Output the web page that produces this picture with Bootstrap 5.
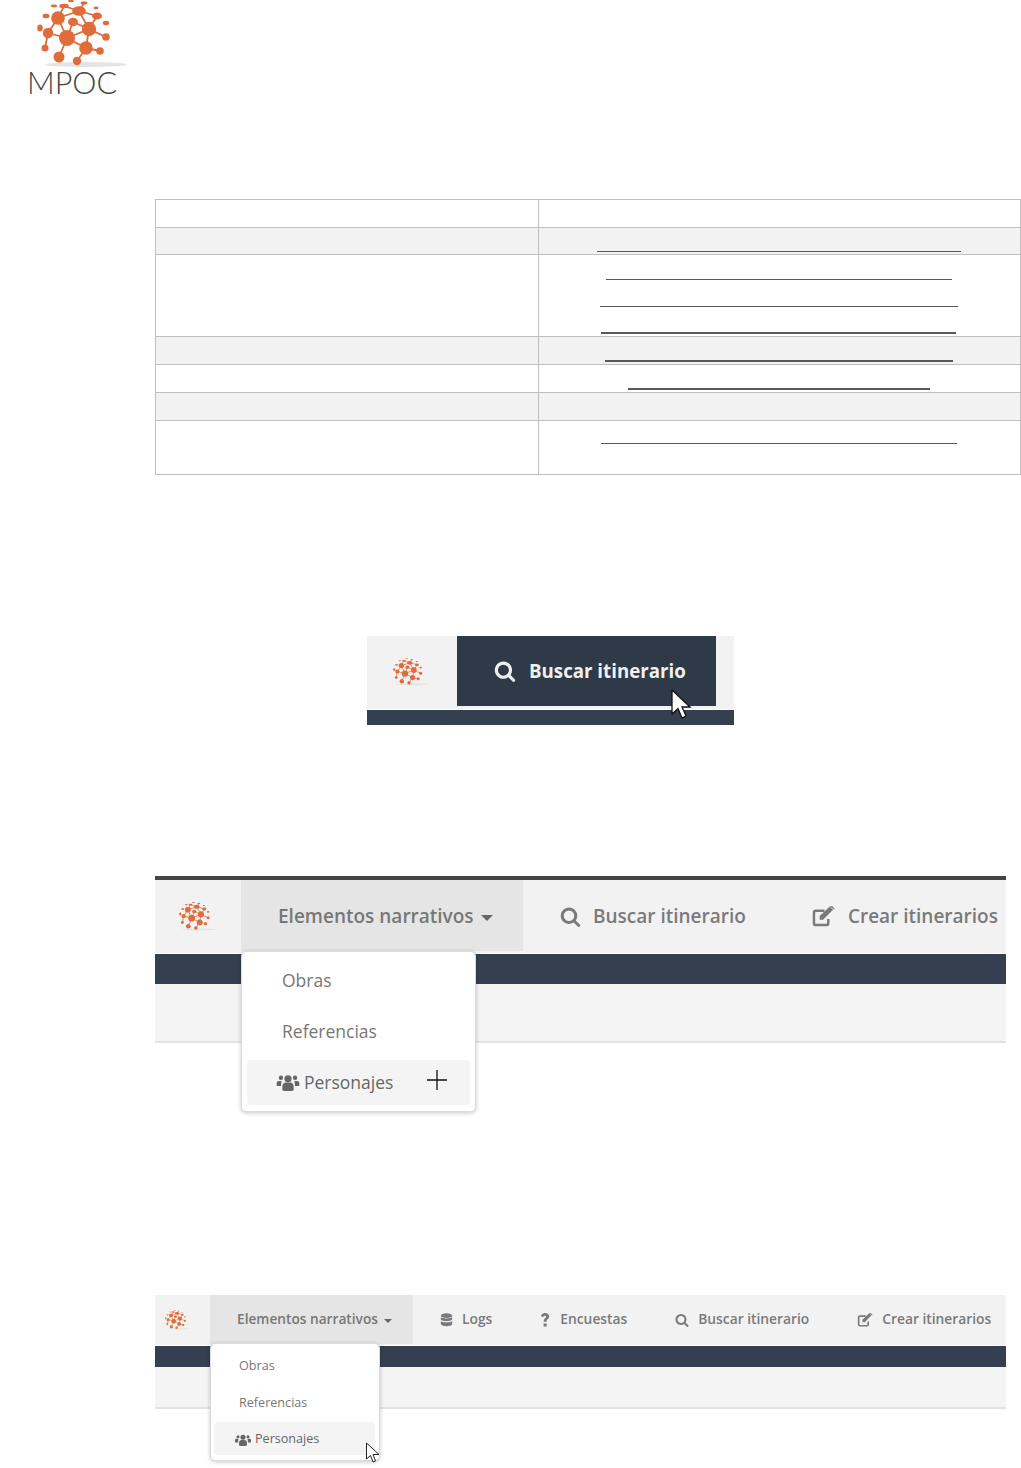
<!DOCTYPE html>
<html lang="es">
  <head>
    <meta charset="UTF-8" />
    <title>MPOC</title>
    <link href="https://cdn.jsdelivr.net/npm/bootstrap@5.3.3/dist/css/bootstrap.min.css" rel="stylesheet" />
    <script src="https://cdn.jsdelivr.net/npm/bootstrap@5.3.3/dist/js/bootstrap.bundle.min.js"></script>
    <style>
      body {
        margin: 0;
        background: #fff;
        font-family: "Open Sans", "Liberation Sans", sans-serif;
      }

      /* logo */
      .mp-logo {
        height: 199px;
        padding-left: 37px;
      }
      .mp-logo svg {
        display: block;
        width: 90px;
        height: 68px;
      }
      .mp-logo-text {
        margin: -4px 0 0 -10px;
        font-family: "Lato", "Open Sans", sans-serif;
        font-weight: 300;
        font-size: 30.5px;
        line-height: 36px;
        color: #444;
      }

      /* table */
      .mp-table {
        width: 866px;
        margin: 0 0 0 155px;
        table-layout: fixed;
        --bs-table-border-color: #bfbfbf;
      }
      .mp-table > tbody > tr > td {
        padding: 0 2px 0 0;
        vertical-align: top;
      }
      .mp-table > tbody > tr > td.mp-gap1 {
        padding-top: 1px;
      }
      .mp-table > tbody > tr.mp-shade > td {
        background-color: #f2f2f2;
      }
      .mp-col-a { width: 383px; }
      .mp-h27 { height: 27px; }
      .mp-h28 { height: 28px; }
      .mp-h54 { height: 54px; }
      .mp-h82 { height: 82px; }
      .mp-line {
        height: 24px;
        margin: 0 auto 3px;
        border-bottom: 1px solid #595959;
      }
      .mp-line:last-child { margin-bottom: 0; }
      .mp-line-b { border-bottom-width: 2px; }
      .mp-line-s { height: 23px; }
      .mp-line-t { height: 25px; }
      .w364 { width: 364px; }
      .w346 { width: 346px; }
      .w358 { width: 358px; }
      .w355 { width: 355px; }
      .w348 { width: 348px; }
      .w302 { width: 302px; }
      .w356 { width: 356px; }

      /* screenshots */
      .mp-shot { margin-left: 155px; width: 851px; }
      .mp-nav { background: #f2f2f2; color: #777; white-space: nowrap; }
      .mp-logo-cell { flex-shrink: 0; }
      .mp-link { color: #7a7a7a; }
      .mp-bar { background: #343f50; }
      .mp-sub { background: #f4f4f4; border-bottom: 2px solid #e3e3e3; }
      .mp-active { background: #e5e5e5; position: relative; flex-shrink: 0; }
      .mp-caret {
        display: inline-block;
        border-style: solid;
        border-color: #666 transparent transparent;
      }
      .mp-menu.dropdown-menu {
        position: absolute;
        left: 0;
        margin: 0;
        min-width: 0;
        border: 1px solid #dcdcdc;
        border-radius: 5px;
        box-shadow: 0 1px 4px rgba(0, 0, 0, 0.22);
        color: #777;
      }
      .mp-menu .dropdown-item { color: #777; }
      .mp-menu .mp-hover { background: #f4f4f4; border-radius: 4px; color: #666; }

      /* first picture */
      .mp-shot-a { margin-left: 367px; width: 367px; }
      .mp-shot-a .mp-nav { height: 74px; border-bottom: 1px solid #fff; }
      .mp-shot-a .mp-logo-cell { width: 90px; padding-left: 26px; padding-top: 21px; }
      .mp-shot-a .mp-logo-cell svg { width: 36px; height: 30px; display: block; }
      .mp-tab {
        width: 259px;
        height: 70px;
        padding-left: 37px;
        gap: 13px;
        background: #2e3a47;
        color: #f0f0f0;
        font-size: 18.7px;
        font-weight: 700;
      }
      .mp-shot-a .mp-bar { height: 15px; }
      .mp-cursor-a { position: absolute; left: 303px; top: 53px; }

      /* second picture */
      .mp-shot-b .mp-rule { height: 4px; background: #444; }
      .mp-shot-b .mp-nav { height: 73px; font-size: 19px; font-weight: 600; }
      .mp-shot-b .mp-logo-cell { width: 86px; padding-left: 24px; }
      .mp-shot-b .mp-logo-cell svg { width: 38px; height: 31px; display: block; }
      .mp-shot-b .mp-active { width: 282px; height: 71px; padding: 2px 0 0 37px; gap: 7px; }
      .mp-shot-b .mp-caret { border-width: 6px 6.5px 0; margin-top: 3px; }
      .mp-shot-b .mp-link { padding: 0 33px; gap: 12px; }
      .mp-shot-b .mp-link.mp-first { padding-left: 37px; }
      .mp-shot-b .mp-link.mp-last { width: 227px; overflow: hidden; padding-right: 0; gap: 13px; }
      .mp-shot-b .mp-bar { height: 30px; margin-top: 1px; }
      .mp-shot-b .mp-sub { height: 59px; }
      .mp-shot-b .mp-menu {
        top: 71px;
        width: 235px;
        height: 161px;
        padding: 3px 0 0;
        font-weight: 400;
      }
      .mp-shot-b .dropdown-item { height: 51px; padding: 0 0 0 40px; font-size: 17.5px; }
      .mp-shot-b .dropdown-item.mp-hover {
        width: 223px;
        height: 45px;
        margin: 3px 0 0 5px;
        padding-left: 29px;
        gap: 4px;
      }
      .mp-shot-b .mp-plus { margin: -5px 0 0 30px; }

      /* third picture */
      .mp-shot-c { margin-bottom: 59px; }
      .mp-shot-c .mp-nav { height: 50px; font-size: 13.7px; font-weight: 600; }
      .mp-shot-c .mp-logo-cell { width: 55px; padding-left: 10px; }
      .mp-shot-c .mp-logo-cell svg { width: 26px; height: 22px; display: block; }
      .mp-shot-c .mp-active { width: 203px; height: 49px; padding-left: 27px; gap: 6px; }
      .mp-shot-c .mp-caret { border-width: 4px 4px 0; margin-top: 2px; }
      .mp-shot-c .mp-link { padding: 0 24px 1px; gap: 10px; font-size: 13.8px; }
      .mp-shot-c .mp-link.mp-first { padding-left: 27px; gap: 9px; }
      .mp-shot-c .mp-link.mp-search-link,
      .mp-shot-c .mp-link.mp-last { gap: 9px; }
      .mp-shot-c .mp-link.mp-last { padding-right: 0; }
      .mp-shot-c .mp-bar { height: 21px; margin-top: 1px; }
      .mp-shot-c .mp-sub { height: 42px; }
      .mp-shot-c .mp-menu {
        top: 48px;
        width: 170px;
        height: 118px;
        padding: 4px 0 0;
        font-weight: 400;
      }
      .mp-shot-c .dropdown-item { height: 37px; padding: 0 0 0 28px; font-size: 12.6px; }
      .mp-shot-c .dropdown-item.mp-hover {
        width: 161px;
        height: 33px;
        margin: 0 0 0 3px;
        padding: 2px 0 0 21px;
        gap: 4px;
      }
      .mp-cursor-c { position: absolute; left: 210px; top: 147px; z-index: 1050; }

      .mp-gap-a { height: 161px; }
      .mp-gap-b { height: 151px; }
      .mp-gap-c { height: 252px; }
    </style>
  </head>
  <body>
    <!-- shared drawings -->
    <svg class="d-none" xmlns="http://www.w3.org/2000/svg">
      <symbol id="mp-globe" viewBox="37 0 90 68">
        <ellipse cx="86" cy="64.5" rx="41" ry="2.4" fill="#e4e4e4" />
        <g stroke="#e06c3c" stroke-width="1.8" fill="none">
          <path d="M67 38L58 18L79 11L89 29L67 38L86 48L89 29M58 18L48 33L67 38L59 57M79 11L97 16L89 29L106 37M86 48L77 61M86 48L100 51M58 18L64 6L79 11L84 3M67 38L73 22L89 29M48 33L45 48" />
        </g>
        <g fill="#e06c3c">
          <circle cx="67" cy="38" r="8" />
          <circle cx="89" cy="29" r="7.200" />
          <circle cx="58" cy="18" r="6.800" />
          <ellipse cx="79" cy="11" rx="6.800" ry="4.800" />
          <circle cx="86" cy="48" r="6.800" />
          <circle cx="59" cy="57" r="5.500" />
          <circle cx="48" cy="33" r="5.200" />
          <circle cx="77" cy="61" r="4.200" />
          <circle cx="45" cy="48" r="3.500" />
          <circle cx="100" cy="51" r="3.800" />
          <circle cx="106" cy="37" r="3.800" />
          <ellipse cx="73" cy="22" rx="5" ry="4.200" />
          <ellipse cx="97" cy="16" rx="5" ry="3.500" />
          <ellipse cx="64" cy="6" rx="4.800" ry="2.200" />
          <ellipse cx="84" cy="3" rx="3.500" ry="1.700" />
          <ellipse cx="71" cy="1" rx="3" ry="1.200" />
          <ellipse cx="54" cy="6" rx="3.200" ry="1.400" />
          <ellipse cx="46" cy="16" rx="3.500" ry="2.200" />
          <ellipse cx="40" cy="28" rx="2.800" ry="3.500" />
          <ellipse cx="106" cy="23" rx="3.200" ry="2.200" />
          <ellipse cx="96" cy="8" rx="2.500" ry="1.400" />
        </g>
      </symbol>
      <symbol id="mp-search" viewBox="0 0 1792 1792">
        <path fill="currentColor" d="M1216 832q0-185-131.500-316.500t-316.500-131.500-316.500 131.500-131.500 316.500 131.500 316.500 316.500 131.500 316.500-131.500 131.500-316.500zm512 832q0 52-38 90t-90 38q-54 0-90-38l-343-342q-179 124-399 124-143 0-273.500-55.500t-225-150-150-225-55.500-273.500 55.500-273.500 150-225 225-150 273.500-55.500 273.500 55.500 225 150 150 225 55.500 273.500q0 220-124 399l343 343q37 37 37 90z" />
      </symbol>
      <symbol id="mp-edit" viewBox="0 0 24 22">
        <path fill="none" stroke="currentColor" stroke-width="2.600" d="M17 13.500V18a2 2 0 0 1-2 2H4a2 2 0 0 1-2-2V7a2 2 0 0 1 2-2h9" />
        <path fill="currentColor" d="M8 10.500L18.500 0.500L22 4L11.500 14.500H8zM19.500 0L21 0L23.500 2.500V3.500L22.500 3.500L19 0.500z" />
      </symbol>
      <symbol id="mp-users" viewBox="0 0 24 18">
        <g fill="currentColor">
          <circle cx="12" cy="5" r="3.800" />
          <path d="M6 17v-3.500C6 10.500 8 9 9.500 9h5C16 9 18 10.500 18 13.500V17q-1 1-2.500 1h-7Q7 18 6 17z" />
          <circle cx="4.500" cy="4" r="2.300" />
          <circle cx="19.500" cy="4" r="2.300" />
          <path d="M0 12V9.500C0 8 1 7.300 2.500 7.300h2.800C5 9 4.500 10.500 4.700 12.700H1Q0 12.700 0 12zM24 12V9.500C24 8 23 7.300 21.500 7.300h-2.800C19 9 19.500 10.500 19.300 12.700H23Q24 12.700 24 12z" />
        </g>
      </symbol>
      <symbol id="mp-database" viewBox="0 0 14 16">
        <g fill="currentColor">
          <ellipse cx="7" cy="3" rx="6.500" ry="2.800" />
          <path d="M0.500 4.600C2 6.800 12 6.800 13.500 4.600V7.300C12 9.600 2 9.600 0.500 7.300z" />
          <path d="M0.500 9C2 11.200 12 11.200 13.500 9V12.800C12 15.800 2 15.800 0.500 12.800z" />
        </g>
      </symbol>
      <symbol id="mp-question" viewBox="0 0 10 16">
        <path fill="currentColor" d="M0.300 3.300C1.300 1 3 0 5.200 0C7.800 0 9.800 1.700 9.800 4.100C9.800 6.800 6.800 7.100 6.800 9.300V10H3.500V9C3.500 6.200 6.300 5.800 6.300 4.300C6.300 3.500 5.700 3 4.900 3C4 3 3.300 3.600 2.700 4.800zM3.400 12H6.900V15.500H3.400z" />
      </symbol>
    </svg>

    <header class="mp-logo">
      <svg><use href="#mp-globe" /></svg>
      <div class="mp-logo-text">MPOC</div>
    </header>

    <table class="table table-bordered mp-table">
      <tbody>
        <tr class="mp-h28"><td class="mp-col-a"></td><td></td></tr>
        <tr class="mp-shade mp-h27">
          <td></td>
          <td><div class="mp-line w364"></div></td>
        </tr>
        <tr class="mp-h82">
          <td></td>
          <td class="mp-gap1">
            <div class="mp-line w346"></div>
            <div class="mp-line w358"></div>
            <div class="mp-line mp-line-b w355"></div>
          </td>
        </tr>
        <tr class="mp-shade mp-h28">
          <td></td>
          <td><div class="mp-line mp-line-b mp-line-t w348"></div></td>
        </tr>
        <tr class="mp-h28">
          <td></td>
          <td><div class="mp-line mp-line-b mp-line-t w302"></div></td>
        </tr>
        <tr class="mp-shade mp-h28"><td></td><td></td></tr>
        <tr class="mp-h54">
          <td></td>
          <td><div class="mp-line mp-line-s w356"></div></td>
        </tr>
      </tbody>
    </table>

    <div class="mp-gap-a"></div>

    <section class="mp-shot-a position-relative">
      <div class="mp-nav d-flex">
        <div class="mp-logo-cell"><svg><use href="#mp-globe" /></svg></div>
        <div class="mp-tab d-flex align-items-center">
          <svg width="22" height="22"><use href="#mp-search" /></svg>
          <span>Buscar itinerario</span>
        </div>
      </div>
      <div class="mp-bar"></div>
      <svg class="mp-cursor-a" width="22" height="32" viewBox="0 0 22 32">
        <path d="M2 1V25L8 19.500L12 29L16 27L12 18H20z" fill="#fff" stroke="#111" stroke-width="1.300" />
      </svg>
    </section>

    <div class="mp-gap-b"></div>

    <section class="mp-shot mp-shot-b">
      <div class="mp-rule"></div>
      <nav class="mp-nav d-flex">
        <div class="mp-logo-cell d-flex align-items-center"><svg><use href="#mp-globe" /></svg></div>
        <div class="mp-active d-flex align-items-center">
          <span>Elementos narrativos</span><span class="mp-caret"></span>
          <div class="dropdown-menu show mp-menu">
            <a class="dropdown-item d-flex align-items-center" href="#">Obras</a>
            <a class="dropdown-item d-flex align-items-center" href="#">Referencias</a>
            <a class="dropdown-item d-flex align-items-center mp-hover" href="#">
              <svg width="24" height="17"><use href="#mp-users" /></svg>
              <span>Personajes</span>
              <svg class="mp-plus" width="20" height="20" viewBox="0 0 20 20">
                <path d="M10 0V20M0 10H20" stroke="#111" stroke-width="1.300" />
              </svg>
            </a>
          </div>
        </div>
        <a class="mp-link mp-first d-flex align-items-center text-decoration-none">
          <svg width="21" height="21"><use href="#mp-search" /></svg>
          <span>Buscar itinerario</span>
        </a>
        <a class="mp-link mp-last d-flex align-items-center text-decoration-none">
          <svg width="23" height="21"><use href="#mp-edit" /></svg>
          <span>Crear itinerarios</span>
        </a>
      </nav>
      <div class="mp-bar"></div>
      <div class="mp-sub"></div>
    </section>

    <div class="mp-gap-c"></div>

    <section class="mp-shot mp-shot-c position-relative">
      <nav class="mp-nav d-flex">
        <div class="mp-logo-cell d-flex align-items-center"><svg><use href="#mp-globe" /></svg></div>
        <div class="mp-active d-flex align-items-center">
          <span>Elementos narrativos</span><span class="mp-caret"></span>
          <div class="dropdown-menu show mp-menu">
            <a class="dropdown-item d-flex align-items-center" href="#">Obras</a>
            <a class="dropdown-item d-flex align-items-center" href="#">Referencias</a>
            <a class="dropdown-item d-flex align-items-center mp-hover" href="#">
              <svg width="16" height="12"><use href="#mp-users" /></svg>
              <span>Personajes</span>
            </a>
          </div>
        </div>
        <a class="mp-link mp-first d-flex align-items-center text-decoration-none">
          <svg width="13" height="14"><use href="#mp-database" /></svg>
          <span>Logs</span>
        </a>
        <a class="mp-link d-flex align-items-center text-decoration-none">
          <svg width="10" height="14"><use href="#mp-question" /></svg>
          <span>Encuestas</span>
        </a>
        <a class="mp-link mp-search-link d-flex align-items-center text-decoration-none">
          <svg width="14" height="14"><use href="#mp-search" /></svg>
          <span>Buscar itinerario</span>
        </a>
        <a class="mp-link mp-last d-flex align-items-center text-decoration-none">
          <svg width="16" height="14"><use href="#mp-edit" /></svg>
          <span>Crear itinerarios</span>
        </a>
      </nav>
      <div class="mp-bar"></div>
      <div class="mp-sub"></div>
      <svg class="mp-cursor-c" width="16" height="22" viewBox="0 0 16 22">
        <path d="M1.500 1V17L5.500 13.500L8 20L10.500 19L8 12.500H14z" fill="#fff" stroke="#222" stroke-width="1" />
      </svg>
    </section>
  </body>
</html>
